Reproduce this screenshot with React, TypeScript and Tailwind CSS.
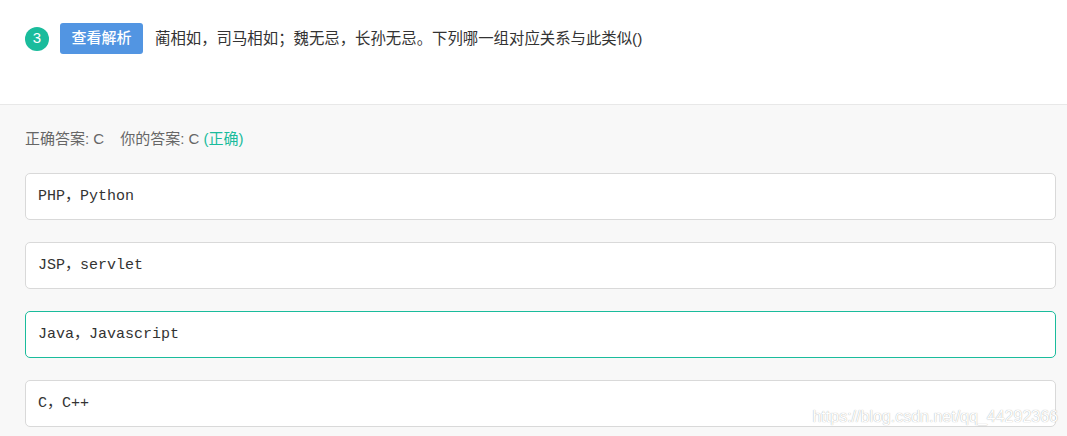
export default function App() {
  const options = [
    { text: "PHP，Python", correct: false },
    { text: "JSP，servlet", correct: false },
    { text: "Java，Javascript", correct: true },
    { text: "C，C++", correct: false },
  ];

  return (
    <div className="relative h-[436px] w-[1067px] overflow-hidden bg-[#f8f8f8] font-['Microsoft_YaHei','Liberation_Sans','Noto_Sans_CJK_SC',sans-serif]">
      <div className="flex h-[105px] items-start border-b border-[#e8e8e8] bg-white px-[25px] pt-[23px]">
        <div className="flex items-center">
          <span className="mr-[11px] flex h-[24px] w-[24px] items-center justify-center rounded-full bg-[#1abc9c] text-[15px] text-white">
            3
          </span>
          <button
            type="button"
            className="flex h-[31px] w-[83px] items-center justify-center rounded-[3px] bg-[#5295e2] text-[15px] font-medium text-white"
          >
            查看解析
          </button>
          <p className="ml-[12px] text-[15.4px] text-[#333]">
            蔺相如，司马相如；魏无忌，长孙无忌。下列哪一组对应关系与此类似()
          </p>
        </div>
      </div>

      <div className="pl-[25px] pr-[11px] pt-[23px]">
        <p className="text-[15px] leading-[22px] text-[#666]">
          正确答案: C<span className="ml-[16px]">你的答案: C</span>{" "}
          <span className="text-[#1abc9c]">(正确)</span>
        </p>

        <div className="mt-[23px] flex flex-col gap-[22px]">
          {options.map((o) => (
            <div
              key={o.text}
              className={`flex h-[47px] items-center rounded-[5px] border bg-white px-[12px] pt-[2px] ${
                o.correct ? "border-[#1abc9c]" : "border-[#d9d9d9]"
              }`}
            >
              <span className="font-['Courier_New','Liberation_Mono','Noto_Sans_CJK_SC',monospace] text-[15px] text-[#333]">
                {o.text}
              </span>
            </div>
          ))}
        </div>
      </div>

      <span className="absolute right-[9px] top-[405px] font-['Liberation_Sans',sans-serif] text-[16px] text-white [text-shadow:0_0_1px_#999]">
        https://blog.csdn.net/qq_44292366
      </span>
    </div>
  );
}
